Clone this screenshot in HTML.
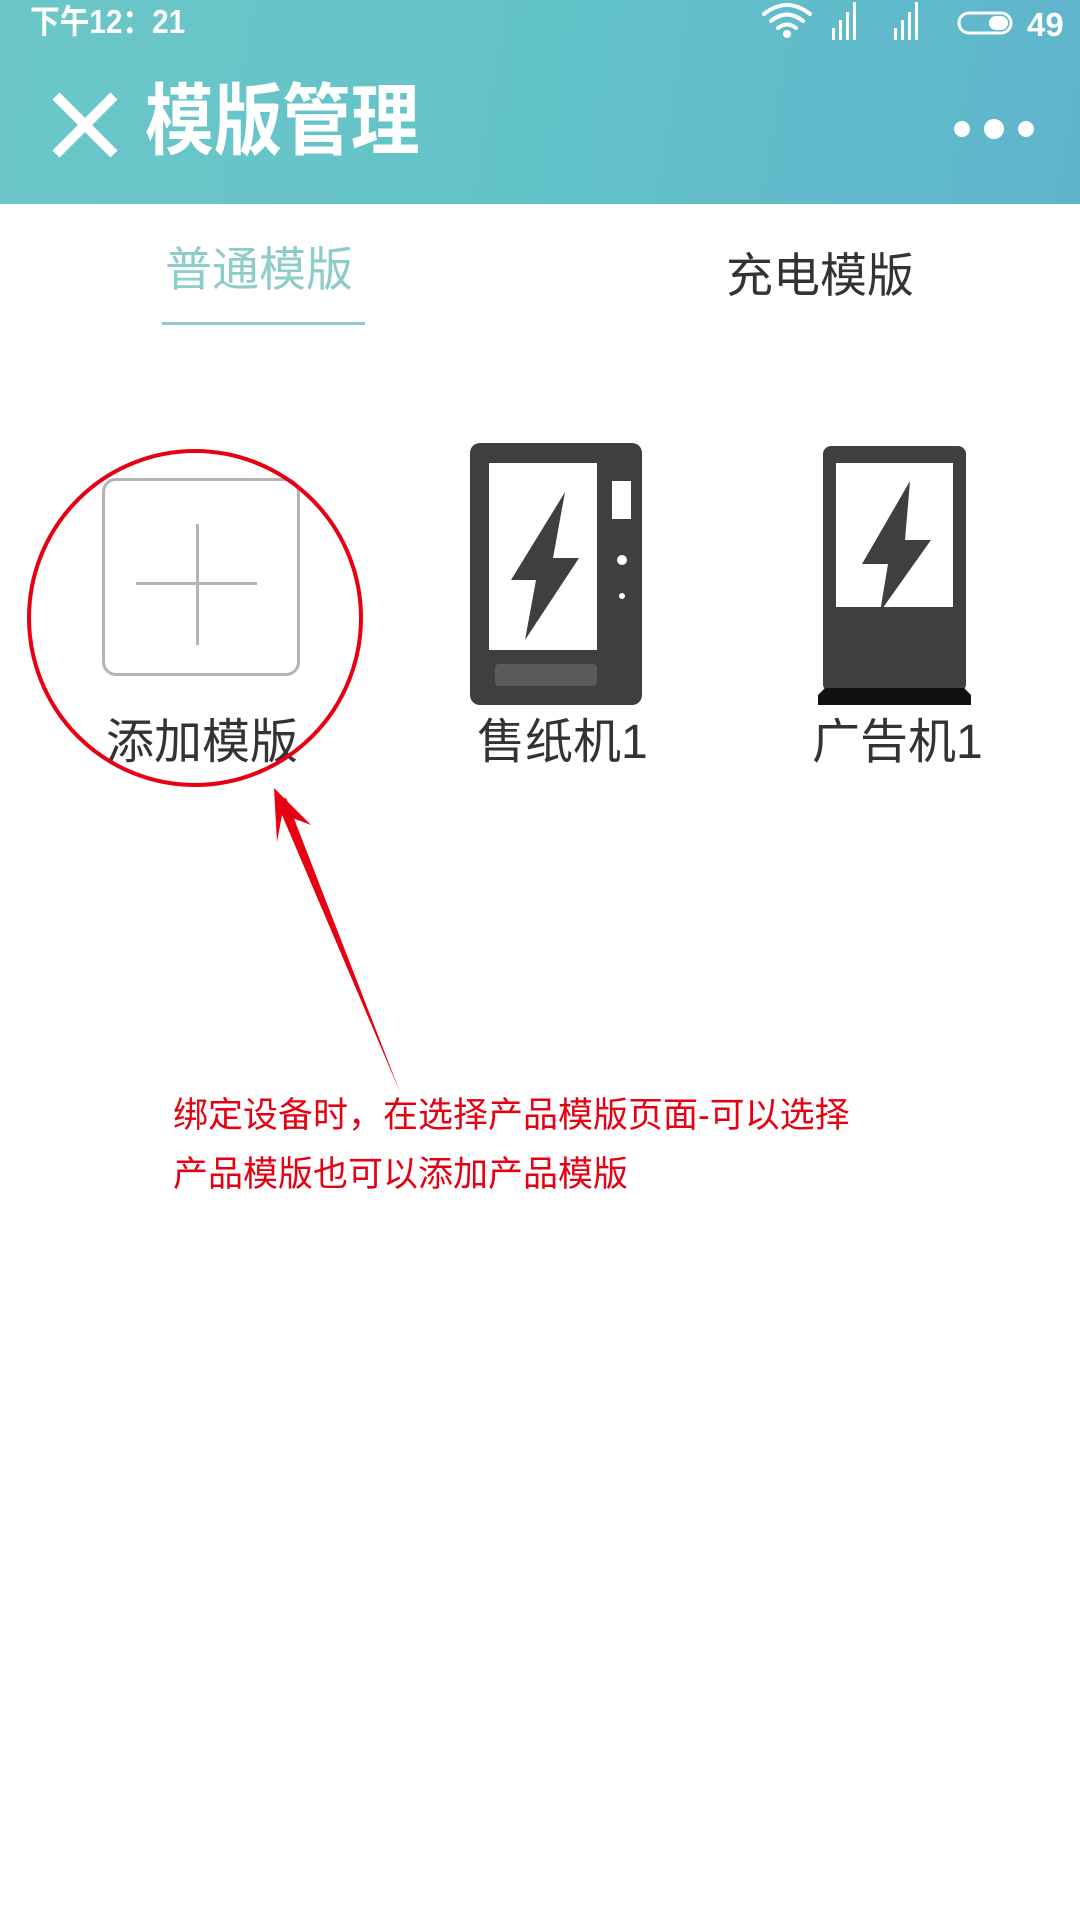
<!DOCTYPE html>
<html><head><meta charset="utf-8"><style>
html,body{margin:0;padding:0;width:1080px;height:1920px;background:#fff;overflow:hidden;font-family:"Liberation Sans","Noto Sans CJK SC",sans-serif;}
.abs{position:absolute;}
#hdr{left:0;top:0;width:1080px;height:204px;background:linear-gradient(100deg,#6cc6c7 0%,#62c3c9 50%,#5fb4cc 100%);}
.t{white-space:nowrap;line-height:1;}
</style></head><body>
<div id="hdr" class="abs"></div>
<div class="abs t" style="left:30px;top:5px;font-size:33px;color:#fff;font-weight:bold;transform:scaleX(0.9);transform-origin:0 0;">下午12：21</div>
<svg class="abs" style="left:760px;top:0" width="320" height="44" viewBox="0 0 320 44">
 <g fill="none" stroke="#fff" stroke-width="4" stroke-linecap="round">
  <path d="M4 14 Q27 -4 50 14"/><path d="M11 21 Q27 8 43 21"/><path d="M18 28 Q27 21 36 28"/>
 </g>
 <circle cx="27" cy="34" r="4" fill="#fff"/>
 <g fill="#fff"><rect x="72" y="28" width="3" height="12"/><rect x="79" y="20" width="3" height="20"/><rect x="86" y="12" width="3" height="28"/><rect x="93" y="2" width="3" height="38"/>
 <rect x="134" y="28" width="3" height="12"/><rect x="141" y="20" width="3" height="20"/><rect x="148" y="12" width="3" height="28"/><rect x="155" y="2" width="3" height="38"/></g>
 <rect x="199" y="13" width="52" height="20" rx="10" fill="none" stroke="#fff" stroke-width="3"/>
 <rect x="229" y="16" width="19" height="14" rx="7" fill="#fff"/>
 <text x="267" y="36" font-size="33" font-weight="bold" fill="#fff" font-family="Liberation Sans">49</text>
</svg>
<svg class="abs" style="left:50px;top:92px" width="70" height="66" viewBox="0 0 70 66"><path d="M6 4 L64 62 M64 4 L6 62" stroke="#fff" stroke-width="10"/></svg>
<div class="abs t" style="left:145px;top:82px;font-size:78px;color:#fff;font-weight:bold;transform:scaleX(0.88);transform-origin:0 0;">模版管理</div>
<svg class="abs" style="left:950px;top:115px" width="90" height="28"><circle cx="12" cy="14" r="8" fill="#fff"/><circle cx="44" cy="14" r="10" fill="#fff"/><circle cx="76" cy="14" r="8" fill="#fff"/></svg>

<div class="abs t" style="left:165px;top:246px;font-size:47px;color:#8ccdca;">普通模版</div>
<div class="abs" style="left:162px;top:322px;width:203px;height:3px;background:#8ccdca;"></div>
<div class="abs t" style="left:726px;top:252px;font-size:47px;color:#333;">充电模版</div>

<div class="abs" style="left:102px;top:478px;width:192px;height:192px;border:3px solid #b4b4b4;border-radius:14px;"></div>
<div class="abs" style="left:136px;top:582px;width:121px;height:3px;background:#b4b4b4;"></div>
<div class="abs" style="left:196px;top:524px;width:3px;height:121px;background:#b4b4b4;"></div>
<div class="abs t" style="left:106px;top:719px;font-size:48px;color:#333;">添加模版</div>

<svg class="abs" style="left:460px;top:435px" width="200" height="280" viewBox="460 435 200 280">
 <rect x="470" y="443" width="172" height="262" rx="10" fill="#3f3f3f"/>
 <rect x="489" y="463" width="108" height="187" fill="#fff"/>
 <rect x="612" y="481" width="19" height="38" fill="#fff"/>
 <circle cx="622" cy="560" r="5" fill="#fff"/><circle cx="622" cy="596" r="3" fill="#fff"/>
 <rect x="495" y="664" width="102" height="22" rx="4" fill="#5a5a5a"/>
 <path d="M565 492 L511 580 L536 580 L525 640 L579 558 L553 558 Z" fill="#3f3f3f"/>
</svg>
<div class="abs t" style="left:477px;top:719px;font-size:48px;color:#333;">售纸机1</div>

<svg class="abs" style="left:810px;top:435px" width="170" height="280" viewBox="810 435 170 280">
 <rect x="823" y="446" width="143" height="246" rx="8" fill="#3f3f3f"/>
 <rect x="836" y="463" width="117" height="144" fill="#fff"/>
 <path d="M818 705 L971 705 L971 695 L964 688 L825 688 L818 695 Z" fill="#111"/>
 <path d="M910 481 L862 564 L888 564 L880 612 L931 540 L905 540 Z" fill="#3f3f3f"/>
</svg>
<div class="abs t" style="left:812px;top:719px;font-size:48px;color:#333;">广告机1</div>

<svg class="abs" style="left:0;top:0" width="1080" height="1300">
 <ellipse cx="195" cy="618" rx="166" ry="167" fill="none" stroke="#e60012" stroke-width="4"/>
 <path d="M400 1092 L282 815 L277 842 L274 788 L311 825 L287 816 Z" fill="#e60012"/>
 <path d="M400 1092 L278 800 L286 798 Z" fill="#e60012"/>
</svg>
<div class="abs t" style="left:173px;top:1098px;font-size:35px;color:#e60012;">绑定设备时，在选择产品模版页面-可以选择</div>
<div class="abs t" style="left:173px;top:1157px;font-size:35px;color:#e60012;">产品模版也可以添加产品模版</div>
</body></html>
